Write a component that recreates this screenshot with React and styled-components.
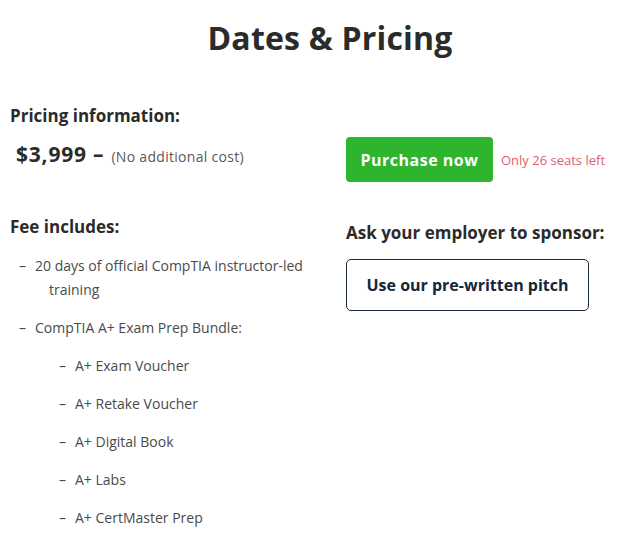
import React from "react";
import styled, { createGlobalStyle } from "styled-components";

const Global = createGlobalStyle`
  html, body { margin: 0; padding: 0; background: #ffffff; }
  body { font-family: "Open Sans", "Liberation Sans", sans-serif; }
  * { box-sizing: border-box; }
`;

const Page = styled.div`
  width: 624px;
  height: 547px;
  padding: 16px 0 0 10px;
  overflow: hidden;
`;

const Title = styled.h1`
  margin: 0 0 0 -10px;
  padding-left: 36px;
  text-align: center;
  font-size: 32px;
  line-height: 44px;
  font-weight: 700;
  color: #2b2b2b;
  letter-spacing: 0.2px;
`;

const Columns = styled.div`
  display: grid;
  grid-template-columns: 336px 1fr;
  margin-top: 44px;
`;

const Col = styled.div`
  display: flex;
  flex-direction: column;
  align-items: flex-start;
`;

const Heading = styled.h3`
  margin: 0;
  font-size: 17px;
  line-height: 24px;
  font-weight: 700;
  color: #2b2b2b;
  margin-top: ${(p) => p.$top || 0}px;
`;

const PriceLine = styled.div`
  display: flex;
  align-items: baseline;
  gap: 7px;
  margin: 12px 0 0 6px;
  color: #2b2b2b;
`;

const Price = styled.span`
  font-size: 21px;
  font-weight: 700;
  line-height: 28px;
  letter-spacing: 0.8px;
`;

const Note = styled.span`
  font-size: 14px;
  color: #585858;
  font-weight: 400;
  letter-spacing: 0.3px;
`;

const List = styled.ul`
  list-style: none;
  margin: ${(p) => (p.$nested ? "0" : "15px 0 0 9px")};
  padding: ${(p) => (p.$nested ? "0 0 0 24px" : "0")};
  width: ${(p) => (p.$nested ? "auto" : "300px")};
`;

const Item = styled.li`
  position: relative;
  padding-left: 16px;
  font-size: 14px;
  line-height: 24px;
  color: #4a4a4a;
  margin-top: ${(p) => (p.$first ? 0 : 14)}px;
  &::before {
    content: "–";
    position: absolute;
    left: 0;
    top: 0;
  }
`;

const Hang = styled.div`
  padding-left: 14px;
  text-indent: -14px;
`;

const PurchaseRow = styled.div`
  display: flex;
  align-items: center;
  gap: 8px;
  margin-top: 33px;
`;

const PurchaseButton = styled.button`
  width: 147px;
  height: 45px;
  border: none;
  border-radius: 4px;
  background: #2db52d;
  color: #ffffff;
  font-family: inherit;
  font-size: 16px;
  font-weight: 700;
  letter-spacing: 0.5px;
  cursor: pointer;
`;

const Seats = styled.span`
  font-size: 13px;
  color: #e0606f;
`;

const PitchButton = styled.button`
  margin-top: 14px;
  width: 243px;
  height: 52px;
  border: 1px solid #1b2a38;
  border-radius: 5px;
  background: #ffffff;
  color: #14263a;
  font-family: inherit;
  font-size: 16px;
  font-weight: 700;
  cursor: pointer;
`;

export default function App() {
  return (
    <>
      <Global />
      <Page>
        <Title>Dates &amp; Pricing</Title>
        <Columns>
          <Col>
            <Heading>Pricing information:</Heading>
            <PriceLine>
              <Price>$3,999 –</Price>
              <Note>(No additional cost)</Note>
            </PriceLine>
            <Heading $top={47}>Fee includes:</Heading>
            <List>
              <Item $first>
                <Hang>20 days of official CompTIA instructor-led training</Hang>
              </Item>
              <Item>
                CompTIA A+ Exam Prep Bundle:
                <List $nested>
                  <Item>A+ Exam Voucher</Item>
                  <Item>A+ Retake Voucher</Item>
                  <Item>A+ Digital Book</Item>
                  <Item>A+ Labs</Item>
                  <Item>A+ CertMaster Prep</Item>
                </List>
              </Item>
            </List>
          </Col>
          <Col>
            <PurchaseRow>
              <PurchaseButton>Purchase now</PurchaseButton>
              <Seats>Only 26 seats left</Seats>
            </PurchaseRow>
            <Heading $top={39}>Ask your employer to sponsor:</Heading>
            <PitchButton>Use our pre-written pitch</PitchButton>
          </Col>
        </Columns>
      </Page>
    </>
  );
}
